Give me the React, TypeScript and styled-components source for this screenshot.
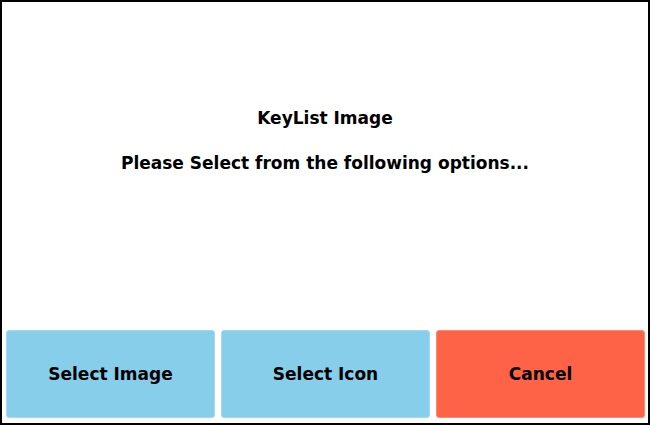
import styled, { createGlobalStyle } from 'styled-components';

const GlobalStyle = createGlobalStyle`
    html, body {
        margin: 0;
        padding: 0;
        background: #ffffff;
    }
    * {
        box-sizing: border-box;
    }
`;

type Variant = 'primary' | 'danger';

const options: { label: string; variant: Variant }[] = [
    { label: 'Select Image', variant: 'primary' },
    { label: 'Select Icon', variant: 'primary' },
    { label: 'Cancel', variant: 'danger' },
];

const App: React.FC = () => {
    return (
        <>
            <GlobalStyle />
            <Dialog>
                <Message>
                    <Title>KeyList Image</Title>
                    <Prompt>Please Select from the following options...</Prompt>
                </Message>
                <ButtonRow>
                    {options.map((opt) => (
                        <OptionButton key={opt.label} $variant={opt.variant}>
                            {opt.label}
                        </OptionButton>
                    ))}
                </ButtonRow>
            </Dialog>
        </>
    );
};

export default App;

const Dialog = styled.div`
    width: 650px;
    height: 425px;
    border: 2px solid #000000;
    display: flex;
    flex-direction: column;
    background: #ffffff;
    font-family: 'DejaVu Sans', Verdana, sans-serif;
    font-weight: bold;
    color: #000000;
`;

const Message = styled.div`
    flex: 1;
    display: flex;
    flex-direction: column;
    align-items: center;
    padding-top: 106px;
    gap: 25px;
`;

const Title = styled.div`
    font-size: 17px;
    line-height: 20px;
`;

const Prompt = styled.div`
    font-size: 17px;
    line-height: 20px;
`;

const ButtonRow = styled.div`
    display: grid;
    grid-template-columns: repeat(3, 1fr);
    gap: 6px;
    padding: 0 3px 5px 4px;
`;

const OptionButton = styled.div<{ $variant: Variant }>`
    height: 88px;
    display: flex;
    align-items: center;
    justify-content: center;
    border-radius: 3px;
    font-size: 17px;
    background: ${(p) => (p.$variant === 'danger' ? '#ff6347' : '#87ceeb')};
    border: 1px solid ${(p) => (p.$variant === 'danger' ? '#ff8a74' : '#a3daf0')};
    cursor: pointer;
`;
